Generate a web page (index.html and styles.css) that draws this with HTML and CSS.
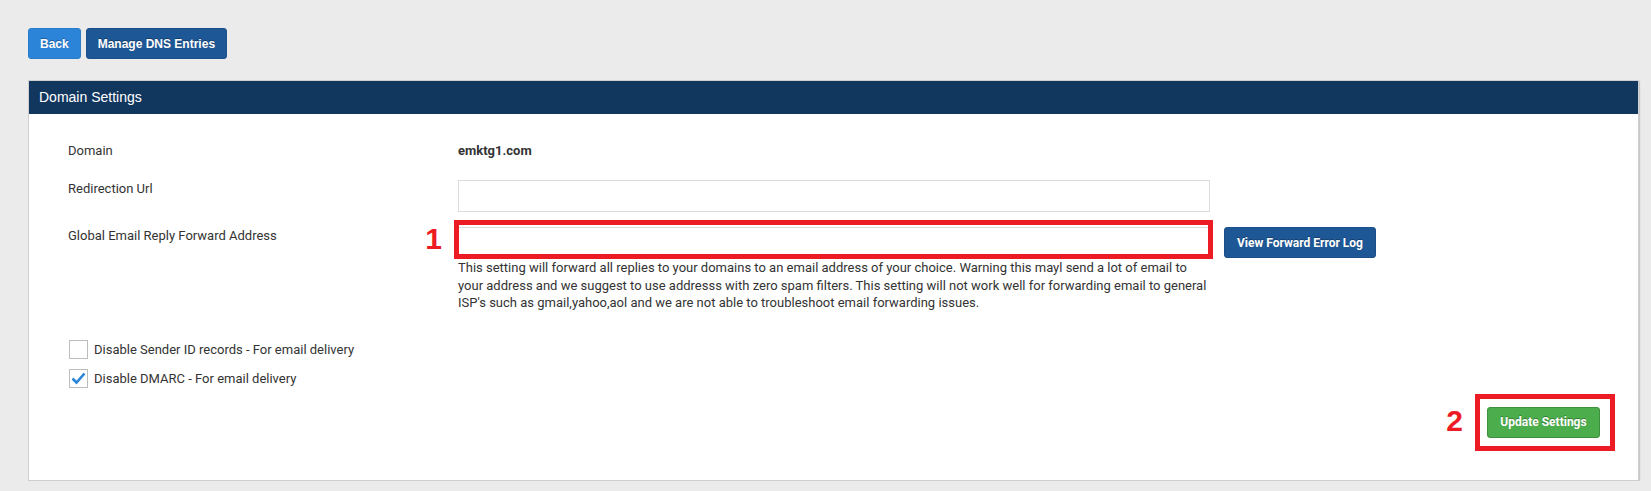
FILE: index.html
```html
<!DOCTYPE html>
<html lang="en">
<head>
    <meta charset="UTF-8">
    <title>Domain Settings</title>
    <link rel="stylesheet" href="styles.css">
</head>
<body>
    <div class="toolbar">
        <button class="btn btn-light">Back</button>
        <button class="btn btn-dark">Manage DNS Entries</button>
    </div>

    <div class="panel">
        <div class="panel-heading">Domain Settings</div>
        <div class="panel-body">
            <div class="row row-domain">
                <div class="label">Domain</div>
                <div class="value"><strong>emktg1.com</strong></div>
            </div>

            <div class="row row-redirect">
                <div class="label">Redirection Url</div>
                <div class="value"><input type="text" class="field"></div>
            </div>

            <div class="row row-forward">
                <div class="label">Global Email Reply Forward Address</div>
                <div class="value">
                    <div class="field-line">
                        <div class="marked">
                            <input type="text" class="field">
                            <span class="mark mark-field"><span class="mark-num">1</span></span>
                        </div>
                        <button class="btn btn-dark btn-log">View Forward Error Log</button>
                    </div>
                    <p class="help">This setting will forward all replies to your domains to an email address of your choice. Warning this mayl send a lot of email to your address and we suggest to use addresss with zero spam filters. This setting will not work well for forwarding email to general ISP's such as gmail,yahoo,aol and we are not able to troubleshoot email forwarding issues.</p>
                </div>
            </div>

            <div class="checks">
                <label class="check">
                    <span class="box"></span>
                    Disable Sender ID records - For email delivery
                </label>
                <label class="check">
                    <span class="box">
                        <svg width="17" height="17" viewBox="0 0 17 17"><path d="M2.5 8.5l4 4 8-9" fill="none" stroke="#2a85d8" stroke-width="2.6"/></svg>
                    </span>
                    Disable DMARC - For email delivery
                </label>
            </div>

            <div class="actions">
                <div class="marked">
                    <button class="btn btn-green">Update Settings</button>
                    <span class="mark mark-btn"><span class="mark-num">2</span></span>
                </div>
            </div>
        </div>
    </div>
</body>
</html>
```

FILE: styles.css
```css
body {
    margin: 0;
    padding: 28px 12px 0 28px;
    background-color: #ebebeb;
    font-family: Roboto, Arial, sans-serif;
    font-size: 13px;
    color: #333;
}

.toolbar {
    display: flex;
    gap: 5px;
    margin-bottom: 21px;
}

.btn {
    height: 31px;
    padding: 0 11px;
    border: 1px solid transparent;
    border-radius: 3px;
    color: #fff;
    font-family: "Liberation Sans", Arial, sans-serif;
    font-weight: bold;
    font-size: 12px;
    white-space: nowrap;
    text-shadow: 0 -1px 0 rgba(0, 0, 0, 0.3);
    cursor: pointer;
}

.btn-light {
    background-color: #2b84d7;
    border-color: #2a7ccb;
}

.btn-dark {
    background-color: #1d5796;
    border-color: #1a4f8a;
}

.btn-log {
    flex-shrink: 0;
    width: 152px;
    margin-left: 14px;
    padding: 0;
    font-family: Roboto, Arial, sans-serif;
}

.btn-green {
    width: 113px;
    padding: 0;
    background-color: #4bad4b;
    border-color: #3e8f3e;
    font-family: Roboto, Arial, sans-serif;
}

.panel {
    background-color: #fff;
    border: 1px solid #cfcfcf;
    box-shadow: 1px 1px 1px #c8c8c8;
    height: 399px;
}

.panel-heading {
    height: 33px;
    line-height: 33px;
    padding-left: 10px;
    background-color: #12375f;
    color: #fff;
    font-family: "Liberation Sans", Arial, sans-serif;
    font-size: 14px;
}

.panel-body {
    padding: 28px 38px 0 39px;
}

.row {
    display: flex;
}

.label {
    width: 390px;
    line-height: 17px;
    flex-shrink: 0;
}

.value {
    flex: 1;
}

.row-domain {
    line-height: 18px;
    margin-bottom: 20px;
}

.row-domain .label {
    line-height: 18px;
}

.row-domain strong {
    font-weight: 700;
}

.row-redirect {
    margin-bottom: 15px;
}

.field {
    display: block;
    box-sizing: border-box;
    width: 752px;
    height: 32px;
    margin: 0;
    border: 1px solid #dcdcdc;
    background: #fff;
}

.row-forward .field {
    height: 31px;
}

.field-line {
    display: flex;
    align-items: flex-start;
}

.marked {
    position: relative;
}

.mark {
    position: absolute;
    border: 5px solid #ed1c24;
    pointer-events: none;
}

.mark-field {
    left: -4px;
    top: -7px;
    right: -3px;
    bottom: -1px;
}

.mark-btn {
    left: -12px;
    top: -13px;
    right: -15px;
    bottom: -13px;
}

.mark-num {
    position: absolute;
    right: 100%;
    margin-right: 17px;
    color: #ed1c24;
    font-family: "Liberation Sans", Arial, sans-serif;
    font-weight: bold;
    font-size: 30px;
    line-height: 30px;
}

.mark-field .mark-num {
    top: -1px;
}

.mark-btn .mark-num {
    top: 7px;
}

.help {
    width: 752px;
    margin: 1px 0 0;
    line-height: 17.5px;
}

.checks {
    display: flex;
    flex-direction: column;
    gap: 10px;
    margin-top: 28px;
}

.check {
    display: flex;
    align-items: center;
    gap: 6px;
    height: 19px;
    padding-left: 1px;
}

.box {
    box-sizing: border-box;
    width: 19px;
    height: 19px;
    border: 1px solid #bdbdbd;
    background: #fff;
    display: flex;
    align-items: center;
    justify-content: center;
}

.actions {
    display: flex;
    justify-content: flex-end;
    margin-top: 19px;
}
```
